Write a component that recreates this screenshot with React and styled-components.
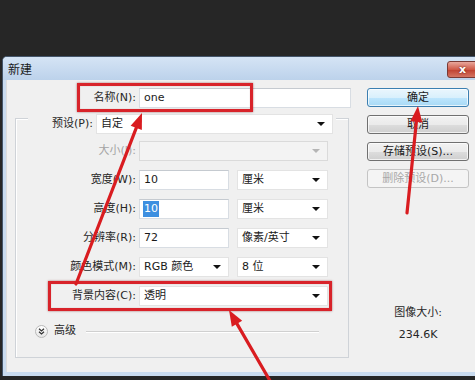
import React from "react";
import styled, { createGlobalStyle, css } from "styled-components";

const FONT = `"DejaVu Sans", "Noto Sans CJK SC", sans-serif`;

const Global = createGlobalStyle`
  html, body { margin: 0; padding: 0; background: #262626; }
  body { font-family: ${FONT}; font-size: 11px; color: #000; }
  * { box-sizing: border-box; }
`;

const Page = styled.div`
  position: relative;
  width: 475px;
  height: 380px;
  overflow: hidden;
  background: #262626;
  padding-top: 56px;
`;

const Dialog = styled.div`
  margin-left: 2px;
  width: 492px;
  border: 1px solid #44556a;
  border-bottom: none;
  border-radius: 5px 5px 0 0;
  background: #c9dbef;
  padding-bottom: 4px;
`;

const TitleBar = styled.div`
  height: 23px;
  display: flex;
  align-items: center;
  padding-left: 5px;
  background: linear-gradient(#d5e4f5, #bcd2eb);
  border-radius: 4px 4px 0 0;
  font-family: "Noto Sans CJK SC", sans-serif;
  font-size: 12px;
  line-height: 16px;
  color: #1a1a1a;
`;

const CloseButton = styled.div`
  margin-left: auto;
  margin-right: 15px;
  align-self: flex-start;
  margin-top: 4px;
  width: 31px;
  height: 17px;
  border: 1px solid #7a3a35;
  border-radius: 3px;
  background: linear-gradient(#e8a79c, #cf5a48 50%, #bf3f2e 51%, #d47462);
  display: flex;
  align-items: center;
  justify-content: center;
  color: #fff;
  font-family: "DejaVu Sans", sans-serif;
  font-weight: bold;
  font-size: 11px;
  line-height: 1;
  text-shadow: 0 0 2px #5a1a10;
`;

const Body = styled.div`
  margin-left: 3px;
  height: 292px;
  background: #f0f0f0;
  border-left: 1px solid #dcdcdc;
  display: flex;
`;

const LeftColumn = styled.div`
  width: 343px;
  padding-top: 8px;
`;

const Row = styled.div`
  display: flex;
  align-items: center;
  height: 20px;
  margin-top: ${(p) => p.$mt || 0}px;
`;

const Label = styled.div`
  width: ${(p) => p.$w}px;
  flex: none;
  text-align: right;
  padding-right: 3px;
  font-family: ${FONT};
  font-size: 11px;
  line-height: 16px;
  color: ${(p) => (p.$disabled ? "#a3a3a3" : "#262626")};
  white-space: nowrap;
`;

const fieldBase = css`
  height: 20px;
  flex: none;
  display: flex;
  align-items: center;
  padding-left: 4px;
  font-family: ${FONT};
  font-size: 11px;
  line-height: 16px;
  color: #1a1a1a;
  white-space: nowrap;
`;

const TextField = styled.div`
  ${fieldBase};
  width: ${(p) => p.$w}px;
  background: #fff;
  border: 1px solid #d8dde3;
  border-top-color: #c5cad0;
`;

const Select = styled.div`
  ${fieldBase};
  width: ${(p) => p.$w}px;
  margin-left: ${(p) => p.$ml || 0}px;
  background: ${(p) => (p.$disabled ? "#f3f3f3" : "#fff")};
  border: 1px solid ${(p) => (p.$disabled ? "#dadada" : "#e3e3e3")};
  padding-right: 6px;
  justify-content: space-between;
`;

const Caret = styled.span`
  width: 0;
  height: 0;
  border-left: 4px solid transparent;
  border-right: 4px solid transparent;
  border-top: 4px solid ${(p) => (p.$disabled ? "#b5b5b5" : "#111")};
  margin-right: 1px;
`;

const Selected = styled.span`
  background: #3d8fe0;
  color: #fff;
  padding: 0 1px;
  margin-left: -1px;
`;

const GroupBox = styled.div`
  margin-top: 10px;
  margin-left: 8px;
  width: 334px;
  height: 240px;
  border: 1px solid #cfd3d8;
  box-shadow: inset 1px 1px 0 #fff;
`;

const PresetRow = styled.div`
  display: flex;
  align-items: center;
  height: 21px;
  margin-top: -6px;
  margin-left: 12px;
  width: 308px;
  background: #f0f0f0;
`;

const AdvancedRow = styled.div`
  display: flex;
  align-items: center;
  height: 16px;
  margin-top: 17px;
  margin-left: 19px;
  margin-right: 29px;
  gap: 6px;
`;

const ExpandIcon = styled.div`
  width: 13px;
  height: 13px;
  border-radius: 50%;
  border: 1px solid #b9b9b9;
  background: linear-gradient(#ffffff, #e6e6e6);
  display: flex;
  align-items: center;
  justify-content: center;
`;

const AdvancedText = styled.span`
  font-family: ${FONT};
  font-size: 11px;
  line-height: 16px;
  color: #262626;
`;

const Rule = styled.div`
  flex: 1;
  height: 1px;
  margin-left: 4px;
  background: #d0d0d0;
  box-shadow: 0 1px 0 #fff;
`;

const RightColumn = styled.div`
  margin-left: 17px;
  width: 102px;
  padding-top: 8px;
  display: flex;
  flex-direction: column;
`;

const Button = styled.div`
  height: 19px;
  margin-bottom: 8px;
  border-radius: 3px;
  display: flex;
  align-items: center;
  justify-content: center;
  font-family: ${FONT};
  font-size: 11px;
  line-height: 16px;
  border: 1px solid ${(p) => (p.$primary ? "#3c7fb1" : p.$disabled ? "#c4c4c4" : "#707070")};
  color: ${(p) => (p.$disabled ? "#a8a8a8" : "#1a1a1a")};
  background: ${(p) =>
    p.$primary
      ? "linear-gradient(#eaf6fd, #d9f0fc 50%, #bee6fd 51%, #a7d9f5)"
      : p.$disabled
      ? "#f4f4f4"
      : "linear-gradient(#f2f2f2, #ebebeb 50%, #dddddd 51%, #cfcfcf)"};
  box-shadow: inset 0 0 0 1px ${(p) => (p.$disabled ? "transparent" : "rgba(255,255,255,0.7)")};
`;

const SizeInfo = styled.div`
  margin-top: 109px;
  text-align: center;
  font-family: ${FONT};
  font-size: 11px;
  line-height: 16px;
  color: #262626;
  display: flex;
  flex-direction: column;
  gap: 6px;
`;

const HighlightBox = styled.div`
  position: absolute;
  left: ${(p) => p.$x}px;
  top: ${(p) => p.$y}px;
  width: ${(p) => p.$w}px;
  height: ${(p) => p.$h}px;
  border: 3px solid #d8232a;
  box-shadow: 0 0 2px rgba(110, 0, 0, 0.55), inset 0 0 1px rgba(110, 0, 0, 0.4);
  pointer-events: none;
`;

const Overlay = styled.svg`
  position: absolute;
  left: 0;
  top: 0;
  pointer-events: none;
`;

function Arrow({ x1, y1, x2, y2 }) {
  const dx = x2 - x1;
  const dy = y2 - y1;
  const len = Math.hypot(dx, dy);
  const ux = dx / len;
  const uy = dy / len;
  const hl = 16;
  const hw = 6;
  const bx = x2 - ux * hl;
  const by = y2 - uy * hl;
  const px = -uy;
  const py = ux;
  const pts = `${x2},${y2} ${bx + px * hw},${by + py * hw} ${bx - px * hw},${by - py * hw}`;
  return (
    <g>
      <line x1={x1} y1={y1} x2={bx + ux * 2} y2={by + uy * 2} stroke="#d91c20" strokeWidth="3.2" strokeLinecap="round" />
      <polygon points={pts} fill="#d91c20" />
    </g>
  );
}

const FIELD_LABEL_W = 123;

export default function App() {
  return (
    <>
      <Global />
      <Page>
        <Dialog>
          <TitleBar>
            新建
            <CloseButton>x</CloseButton>
          </TitleBar>
          <Body>
            <LeftColumn>
              <Row>
                <Label $w={132}>名称(N):</Label>
                <TextField $w={212}>one</TextField>
              </Row>
              <GroupBox>
                <PresetRow>
                  <Label $w={68}>预设(P):</Label>
                  <Select $w={237}>
                    自定
                    <Caret />
                  </Select>
                </PresetRow>
                <Row $mt={7}>
                  <Label $w={FIELD_LABEL_W} $disabled>大小(I):</Label>
                  <Select $w={189} $disabled>
                    <span />
                    <Caret $disabled />
                  </Select>
                </Row>
                <Row $mt={9}>
                  <Label $w={FIELD_LABEL_W}>宽度(W):</Label>
                  <TextField $w={90}>10</TextField>
                  <Select $w={91} $ml={8}>
                    厘米
                    <Caret />
                  </Select>
                </Row>
                <Row $mt={9}>
                  <Label $w={FIELD_LABEL_W}>高度(H):</Label>
                  <TextField $w={90}>
                    <Selected>10</Selected>
                  </TextField>
                  <Select $w={91} $ml={8}>
                    厘米
                    <Caret />
                  </Select>
                </Row>
                <Row $mt={9}>
                  <Label $w={FIELD_LABEL_W}>分辨率(R):</Label>
                  <TextField $w={90}>72</TextField>
                  <Select $w={91} $ml={8}>
                    像素/英寸
                    <Caret />
                  </Select>
                </Row>
                <Row $mt={9}>
                  <Label $w={FIELD_LABEL_W}>颜色模式(M):</Label>
                  <Select $w={90}>
                    RGB 颜色
                    <Caret />
                  </Select>
                  <Select $w={91} $ml={8}>
                    8 位
                    <Caret />
                  </Select>
                </Row>
                <Row $mt={9}>
                  <Label $w={FIELD_LABEL_W}>背景内容(C):</Label>
                  <Select $w={189}>
                    透明
                    <Caret />
                  </Select>
                </Row>
                <AdvancedRow>
                  <ExpandIcon>
                    <svg width="7" height="7" viewBox="0 0 7 7">
                      <path d="M1 0.8 L3.5 3 L6 0.8 M1 3.8 L3.5 6 L6 3.8" fill="none" stroke="#333" strokeWidth="1.2" />
                    </svg>
                  </ExpandIcon>
                  <AdvancedText>高级</AdvancedText>
                  <Rule />
                </AdvancedRow>
              </GroupBox>
            </LeftColumn>
            <RightColumn>
              <Button $primary>确定</Button>
              <Button>取消</Button>
              <Button>存储预设(S)...</Button>
              <Button $disabled>删除预设(D)...</Button>
              <SizeInfo>
                <span>图像大小:</span>
                <span>234.6K</span>
              </SizeInfo>
            </RightColumn>
          </Body>
        </Dialog>
        <HighlightBox $x={77} $y={83} $w={176} $h={29} />
        <HighlightBox $x={48} $y={281} $w={284} $h={30} />
        <Overlay width="475" height="380" viewBox="0 0 475 380">
          <Arrow x1={76} y1={284} x2={142} y2={113} />
          <Arrow x1={407} y1={213} x2={418} y2={106} />
          <Arrow x1={273} y1={386} x2={229} y2={310} />
        </Overlay>
      </Page>
    </>
  );
}
